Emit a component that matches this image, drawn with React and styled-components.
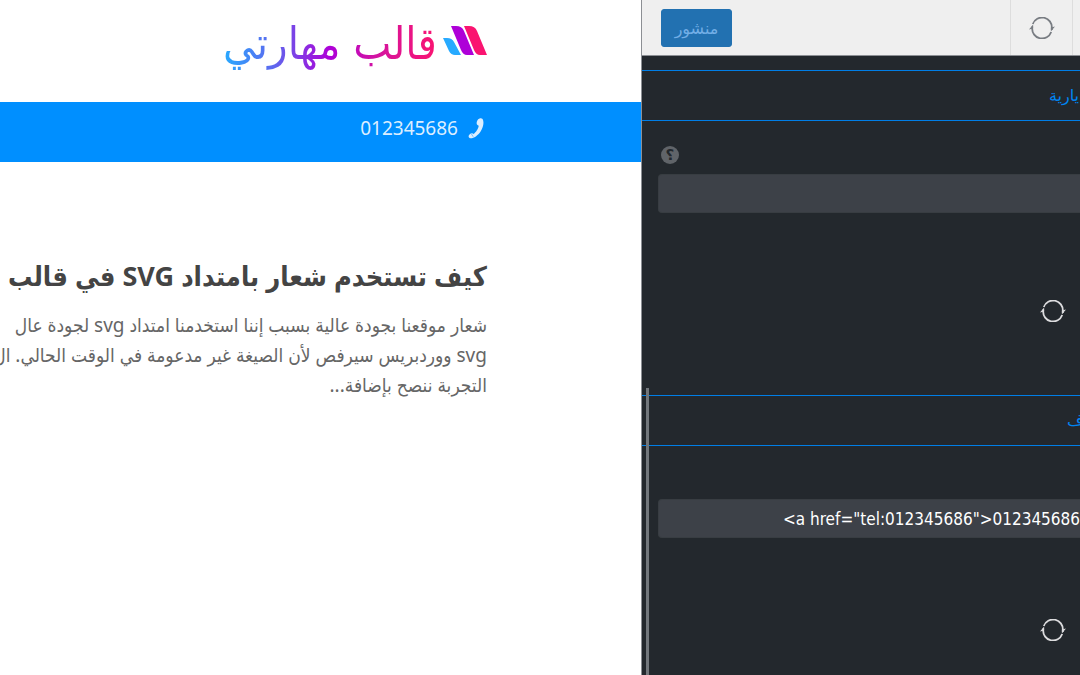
import React from 'react';
import styled, { createGlobalStyle } from 'styled-components';

const GlobalStyle = createGlobalStyle`
  * {
    box-sizing: border-box;
  }

  body {
    margin: 0;
    overflow: hidden;
    background-color: #fff;
    font-family: 'Noto Sans', 'DejaVu Sans', sans-serif;
  }
`;

const Customizer = styled.div`
  display: grid;
  grid-template-columns: minmax(0, 146fr) minmax(0, 100fr);
  height: 100vh;
`;

const Preview = styled.main`
  overflow: hidden;
  background-color: #fff;
`;

const SiteHeader = styled.header`
  display: flex;
  align-items: center;
  gap: 6px;
  height: 102px;
  padding: 0 154px 20px 0;
`;

const Brand = styled.a`
  padding-top: 6px;
  color: transparent;
  background: linear-gradient(90deg, #27aaff 0%, #5f66ee 24%, #ae00d8 50%, #d414a0 72%, #fa1470 100%);
  background-clip: text;
  font-family: 'DejaVu Sans Condensed', 'DejaVu Sans', sans-serif;
  font-size: 45px;
  line-height: 72px;
  white-space: nowrap;
  text-decoration: none;
`;

const ContactBar = styled.div`
  display: flex;
  align-items: flex-start;
  gap: 10px;
  height: 60px;
  padding: 12px 157px 0 0;
  background-color: #008fff;
  color: #dceeff;
`;

const PhoneLink = styled.a`
  color: inherit;
  font-size: 19px;
  line-height: 28px;
  text-decoration: none;
`;

const PhoneIconWrap = styled.span`
  display: flex;
  padding-top: 4px;
`;

const Article = styled.article`
  padding: 92px 154px 0 0;
  font-family: 'Noto Sans', 'DejaVu Sans Condensed', 'DejaVu Sans', sans-serif;
  white-space: nowrap;
`;

const ArticleTitle = styled.h1`
  margin: 0;
  color: #444;
  font-size: 27px;
  font-weight: 700;
  line-height: 44px;
`;

const Excerpt = styled.p`
  margin: 12px 0 0;
  color: #666;
  font-size: 19px;
  line-height: 30px;
`;

const Sidebar = styled.aside`
  display: flex;
  flex-direction: column;
  overflow: hidden;
  border-left: 1px solid #8c8f94;
  background-color: #23282d;
`;

const Toolbar = styled.div`
  display: flex;
  justify-content: space-between;
  flex: none;
  height: 56px;
  border-bottom: 1px solid #8c8f94;
  background-color: #efefef;
`;

const PublishButton = styled.button`
  align-self: center;
  width: 71px;
  height: 38px;
  margin-left: 19px;
  padding: 0;
  border: 1px solid #2271b1;
  border-radius: 3px;
  background-color: #2271b1;
  color: #72aee6;
  font-family: inherit;
  font-size: 16px;
`;

const ToolbarEnd = styled.div`
  display: flex;
  padding-right: 7px;
  border-left: 1px solid #ddd;
`;

const ToolbarIcon = styled.button`
  display: flex;
  align-items: center;
  justify-content: center;
  width: 62px;
  padding: 0;
  border: 0;
  border-right: 1px solid #ddd;
  background: none;
  color: #787c82;
`;

const Panel = styled.div`
  position: relative;
  flex: 1;
  padding-top: 14px;
  overflow: hidden;
`;

const ScrollThumb = styled.div`
  position: absolute;
  top: 332px;
  bottom: 0;
  left: 4px;
  width: 3px;
  background-color: #72777c;
`;

const SectionTitle = styled.h2`
  height: 51px;
  margin: 0;
  padding-left: ${({ $indent }) => $indent}px;
  border-top: 1px solid #007ee6;
  border-bottom: 1px solid #007ee6;
  color: #0085f2;
  font-size: 16px;
  font-weight: 400;
  line-height: 49px;
  white-space: nowrap;
  overflow: hidden;
`;

const Field = styled.div`
  display: flex;
  flex-direction: column;
  align-items: flex-start;
  gap: 10px;
  height: 274px;
  padding: 25px 0 0 16px;
`;

const HelpButton = styled.button`
  width: 18px;
  height: 18px;
  margin-left: 3px;
  padding: 0;
  border: 0;
  border-radius: 50%;
  background-color: #606469;
  color: #23282d;
  font-family: 'DejaVu Sans', sans-serif;
  font-size: 15px;
  font-weight: 700;
  line-height: 18px;
`;

const Spacer = styled.div`
  height: 18px;
`;

const TextInput = styled.input`
  width: 100%;
  height: 39px;
  padding: 0 0 0 124px;
  border: 1px solid #383d42;
  border-right: 0;
  border-radius: 4px 0 0 4px;
  background-color: #3d4148;
  color: #fff;
  font-family: 'DejaVu Sans Condensed', 'DejaVu Sans', sans-serif;
  font-size: 17px;
`;

const PartialRefresh = styled.button`
  display: flex;
  align-self: flex-end;
  margin: ${({ $top }) => $top}px 14px 0 0;
  padding: 0;
  border: 0;
  background: none;
  color: #dcdcde;
`;

const RefreshIcon = () => (
  <svg width="26" height="22" viewBox="0 0 26 22" fill="none" stroke="currentColor" strokeWidth="1.8" aria-hidden="true">
    <path d="M3.800 7A9.800 9.800 0 0 1 22.800 11v2" />
    <path d="M22.200 15A9.800 9.800 0 0 1 3.200 11V9.500" />
    <path d="M21.900 14.500V10.600L26 9.400z" fill="currentColor" stroke="none" />
    <path d="M4.100 7.500v3.900L0 12.600z" fill="currentColor" stroke="none" />
  </svg>
);

const LogoMark = () => (
  <svg width="44" height="30" viewBox="0 0 44 30" aria-hidden="true">
    <path d="M0 12h4q5 0 7 4l7 13h-6q-4 0-6-4z" fill="#27aaff" />
    <path d="M8 0h5q6 0 8 5l10 24h-7q-4 0-6-5z" fill="#ae00d8" />
    <path d="M21 0h5q6 0 8 5l10 24h-7q-4 0-6-5z" fill="#fa1470" />
  </svg>
);

const PhoneIcon = () => (
  <svg width="16" height="21" viewBox="0 0 16 21" fill="currentColor" aria-hidden="true">
    <path d="M10 1.600c1.200-1.600 3.500-2 4.600-.5 1.700 3 .8 8.300-2 12.300-2.700 4-7 7.200-10.300 6.900C.8 20.100.3 18.600.8 17.500c.7-1.500 2.200-2.700 3.400-2.200l1.500.6c2.200-1.500 4.700-5.100 5-8.100l-1.200-.7c-1.600-1.200-.7-4 .5-5.500z" />
    <path d="M3.200 15.600l2 3.200" stroke="#008fff" strokeWidth=".5" />
  </svg>
);

const App = () => {
  return (
    <>
      <GlobalStyle />
      <Customizer>
        <Preview dir="rtl" lang="ar">
          <SiteHeader>
            <LogoMark />
            <Brand href="#home">قالب مهارتي</Brand>
          </SiteHeader>
          <ContactBar>
            <PhoneIconWrap>
              <PhoneIcon />
            </PhoneIconWrap>
            <PhoneLink href="tel:012345686">012345686</PhoneLink>
          </ContactBar>
          <Article>
            <ArticleTitle>كيف تستخدم شعار بامتداد SVG في قالب م</ArticleTitle>
            <Excerpt>
              شعار موقعنا بجودة عالية بسبب إننا استخدمنا امتداد svg لجودة عال
              <br />
              svg ووردبريس سيرفص لأن الصيغة غير مدعومة في الوقت الحالي. ال
              <br />
              التجربة ننصح بإضافة...
            </Excerpt>
          </Article>
        </Preview>

        <Sidebar lang="ar">
          <Toolbar>
            <PublishButton type="button">منشور</PublishButton>
            <ToolbarEnd>
              <ToolbarIcon type="button" aria-label="تحديث">
                <RefreshIcon />
              </ToolbarIcon>
            </ToolbarEnd>
          </Toolbar>
          <Panel>
            <SectionTitle $indent={407}>يارية</SectionTitle>
            <Field>
              <HelpButton type="button">؟</HelpButton>
              <TextInput type="text" aria-label="يارية" />
              <PartialRefresh type="button" aria-label="تحديث" $top={77}>
                <RefreshIcon />
              </PartialRefresh>
            </Field>
            <SectionTitle $indent={425}>ف</SectionTitle>
            <Field>
              <Spacer />
              <TextInput
                type="text"
                aria-label="الهاتف"
                defaultValue={'<a href="tel:012345686">012345686</a>'}
              />
              <PartialRefresh type="button" aria-label="تحديث" $top={71}>
                <RefreshIcon />
              </PartialRefresh>
            </Field>
            <ScrollThumb />
          </Panel>
        </Sidebar>
      </Customizer>
    </>
  );
};

export default App;
